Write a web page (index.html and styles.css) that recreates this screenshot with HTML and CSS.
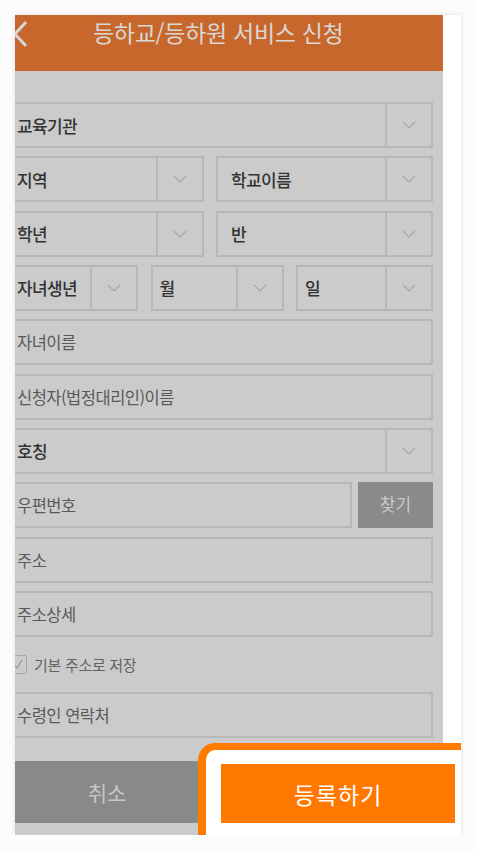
FILE: index.html
```html
<!DOCTYPE html>
<html lang="ko">
<head>
<meta charset="utf-8">
<title>등하교/등하원 서비스 신청</title>
<link rel="stylesheet" href="styles.css">
</head>
<body>
<div class="card">
  <div class="screen">
    <header class="header">
      <svg class="back" width="16" height="28" viewBox="0 0 16 28"><polyline points="13,2 2,14 13,26" fill="none" stroke="#d6d6d6" stroke-width="3"/></svg>
      <h1 class="title">등하교/등하원 서비스 신청</h1>
    </header>
    <div class="form">
      <div class="box select"><span class="label">교육기관</span><span class="arrow"><svg width="14" height="8" viewBox="0 0 14 8"><polyline points="1,1 7,7 13,1" fill="none" stroke="#a8a8a8" stroke-width="1.2"/></svg></span></div>
      <div class="row two">
        <div class="box select"><span class="label">지역</span><span class="arrow"><svg width="14" height="8" viewBox="0 0 14 8"><polyline points="1,1 7,7 13,1" fill="none" stroke="#a8a8a8" stroke-width="1.2"/></svg></span></div>
        <div class="box select"><span class="label">학교이름</span><span class="arrow"><svg width="14" height="8" viewBox="0 0 14 8"><polyline points="1,1 7,7 13,1" fill="none" stroke="#a8a8a8" stroke-width="1.2"/></svg></span></div>
      </div>
      <div class="row two">
        <div class="box select"><span class="label">학년</span><span class="arrow"><svg width="14" height="8" viewBox="0 0 14 8"><polyline points="1,1 7,7 13,1" fill="none" stroke="#a8a8a8" stroke-width="1.2"/></svg></span></div>
        <div class="box select"><span class="label">반</span><span class="arrow"><svg width="14" height="8" viewBox="0 0 14 8"><polyline points="1,1 7,7 13,1" fill="none" stroke="#a8a8a8" stroke-width="1.2"/></svg></span></div>
      </div>
      <div class="row three">
        <div class="box select"><span class="label">자녀생년</span><span class="arrow"><svg width="14" height="8" viewBox="0 0 14 8"><polyline points="1,1 7,7 13,1" fill="none" stroke="#a8a8a8" stroke-width="1.2"/></svg></span></div>
        <div class="box select"><span class="label short">월</span><span class="arrow"><svg width="14" height="8" viewBox="0 0 14 8"><polyline points="1,1 7,7 13,1" fill="none" stroke="#a8a8a8" stroke-width="1.2"/></svg></span></div>
        <div class="box select"><span class="label short">일</span><span class="arrow"><svg width="14" height="8" viewBox="0 0 14 8"><polyline points="1,1 7,7 13,1" fill="none" stroke="#a8a8a8" stroke-width="1.2"/></svg></span></div>
      </div>
      <div class="box input"><span class="ph">자녀이름</span></div>
      <div class="box input"><span class="ph">신청자(법정대리인)이름</span></div>
      <div class="box select"><span class="label">호칭</span><span class="arrow"><svg width="14" height="8" viewBox="0 0 14 8"><polyline points="1,1 7,7 13,1" fill="none" stroke="#a8a8a8" stroke-width="1.2"/></svg></span></div>
      <div class="row zip">
        <div class="box input"><span class="ph">우편번호</span></div>
        <div class="find">찾기</div>
      </div>
      <div class="box input"><span class="ph">주소</span></div>
      <div class="box input"><span class="ph">주소상세</span></div>
      <div class="check-row">
        <span class="checkbox"><svg width="10" height="10" viewBox="0 0 10 10"><polyline points="1,6 4,9 9,1" fill="none" stroke="#9a9a9a" stroke-width="1.2"/></svg></span>
        <span class="check-text">기본 주소로 저장</span>
      </div>
      <div class="box input"><span class="ph">수령인 연락처</span></div>
    </div>
    <div class="actions">
      <div class="cancel">취소</div>
      <div class="submit-under"></div>
    </div>
  </div>
  <div class="strip"></div>
  <div class="highlight">
    <div class="submit">등록하기</div>
  </div>
</div>
</body>
</html>
```

FILE: styles.css
```css
html, body {
  margin: 0;
  padding: 0;
  background: #fcfcfc;
}
body {
  font-family: "Noto Sans CJK KR", "Noto Sans", sans-serif;
  padding: 15px 0 0 15px;
}
.card {
  position: relative;
  width: 446px;
  height: 820px;
  overflow: hidden;
  display: flex;
  background: #ffffff;
  box-shadow: 0 0 5px rgba(0, 0, 0, 0.12);
}
.screen {
  width: 428px;
  flex: 0 0 428px;
  background: #cbcbcb;
  display: flex;
  flex-direction: column;
}
.strip {
  flex: 1;
  background: #ffffff;
}
.header {
  height: 56px;
  flex: 0 0 56px;
  background: #c8672b;
  display: flex;
  align-items: flex-start;
  position: relative;
}
.back {
  margin: 5px 0 0 -2px;
  flex: 0 0 auto;
}
.title {
  margin: 1px 0 0 64px;
  font-size: 23px;
  font-weight: 400;
  color: #d8d8d8;
  line-height: 32px;
  letter-spacing: -0.3px;
}
.form {
  margin: 31px 10px 0 -13px;
  display: flex;
  flex-direction: column;
  gap: 8.33px;
}
.row {
  display: grid;
  column-gap: 12px;
}
.row.two {
  grid-template-columns: 202px 1fr;
}
.row.three {
  grid-template-columns: 136px 133px 1fr;
  column-gap: 12.5px;
}
.row.zip {
  grid-template-columns: 350px 1fr;
  column-gap: 6px;
}
.box {
  height: 46px;
  box-sizing: border-box;
  border: 2px solid #b7b7b7;
  display: flex;
  align-items: center;
}
.label {
  flex: 1;
  padding-left: 13px;
  font-size: 17px;
  font-weight: 500;
  color: #333333;
  letter-spacing: -0.6px;
}
.label.short {
  padding-left: 7px;
}
.arrow {
  width: 44px;
  align-self: stretch;
  border-left: 2px solid #b7b7b7;
  display: flex;
  align-items: center;
  justify-content: center;
}
.ph {
  padding-left: 13px;
  font-size: 16.5px;
  color: #595959;
  letter-spacing: -0.5px;
}
.find {
  height: 46px;
  background: #8a8a8a;
  color: #c9c9c9;
  font-size: 17px;
  display: flex;
  align-items: center;
  justify-content: center;
  padding-bottom: 4px;
  box-sizing: border-box;
}
.check-row {
  height: 38px;
  display: flex;
  align-items: center;
  padding-left: 7px;
  gap: 7px;
  margin-bottom: 0.5px;
}
.checkbox {
  width: 16px;
  height: 17px;
  border: 1.5px solid #a8a8a8;
  border-radius: 2px;
  display: flex;
  align-items: center;
  justify-content: center;
}
.check-text {
  font-size: 15px;
  color: #626262;
  letter-spacing: -0.3px;
}
.actions {
  margin-top: 23px;
  height: 62px;
  display: flex;
}
.cancel {
  flex: 0 0 184px;
  background: #898989;
  color: #c6c6c6;
  font-size: 21px;
  display: flex;
  align-items: center;
  justify-content: center;
}
.submit-under {
  flex: 1;
  background: #cc6200;
}
.highlight {
  position: absolute;
  left: 183px;
  top: 728px;
  width: 300px;
  height: 150px;
  box-sizing: border-box;
  border: 7px solid #ff7b00;
  border-right-width: 8px;
  border-left-width: 8px;
  border-radius: 17px;
  background: #ffffff;
  padding: 14px 0 0 15px;
}
.submit {
  width: 234px;
  height: 59px;
  background: #ff7900;
  color: #ffffff;
  font-size: 23px;
  display: flex;
  align-items: center;
  justify-content: center;
  letter-spacing: 1px;
}
```
